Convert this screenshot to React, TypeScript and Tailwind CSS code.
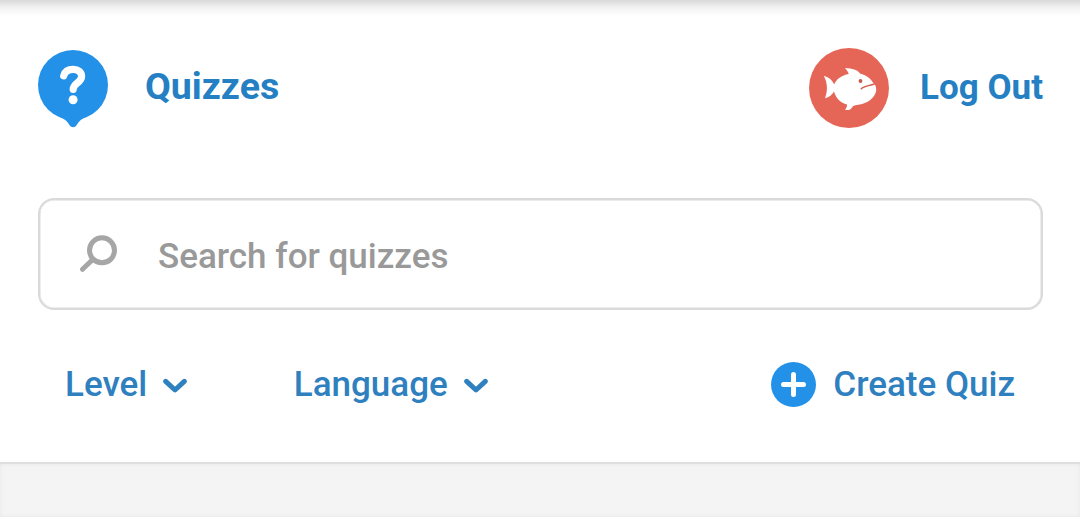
import {useState} from "react"


function QuizLogo() {
  return (
    <svg viewBox="0 0 70 78" fill="none" className="w-[70px] h-[78px] mt-0.5">
      <circle cx="35" cy="35" r="35" fill="#2491e8"/>
      <path fill="#2491e8" d="M22 67C27 69 29.500 71.800 31.600 75.200C33.300 77.800 36.900 77.800 38.600 75.200C40.700 71.800 43 69 48 67z"/>
      <path stroke="#fff" strokeWidth="7.200" strokeLinecap="round" d="M25.700 25.800C26.800 21.500 30.300 19.400 35.200 19.400C40.300 19.400 43.600 22.200 43.600 26.500C43.600 32.800 35.200 33 35.200 39.300"/>
      <circle cx="35.100" cy="49.800" r="4.500" fill="#fff"/>
    </svg>
  )
}


function FishAvatar() {
  return (
    <svg viewBox="0 0 80 80" fill="none" className="size-20">
      <circle cx="40" cy="40" r="40" fill="#e56656"/>
      <path fill="#fff" d="M14.700 27.700C19.500 28.800 23 32 25.200 36.300C27.500 31 32.500 27.300 39.800 26C39 23.800 37.700 21.800 36 20C43.500 20.300 48.500 21.800 51 25.500C57 27 62 30.800 64.500 35.300C67.500 37.500 68 42.500 66.200 46C62.800 52.500 56.500 55.700 49.500 56.800C46.500 57.200 44.500 57.500 43.200 59.200C41.500 61.800 39.500 62.600 36 61.700C37.500 60 38 58.500 38 56.500C31.500 55 27 50.500 25 43.500C23 47 20.500 49 16 50.200C18.800 43 18.800 35 14.700 27.700z"/>
      <circle cx="51.500" cy="33" r="1.900" fill="#c45b4c"/>
      <path stroke="#d45f50" strokeWidth="1.600" strokeLinecap="round" d="M52.300 40.700C54.300 38.300 60 37.500 65 36.300"/>
    </svg>
  )
}


function SearchGlyph() {
  return (
    <svg viewBox="0 0 38 38" fill="none" stroke="#a6a6a6" className="size-[38px]">
      <circle cx="23" cy="15.300" r="12.500" strokeWidth="5"/>
      <path strokeWidth="5" strokeLinecap="round" d="M13.500 24.800L3.500 34.300"/>
    </svg>
  )
}


function Chevron() {
  return (
    <svg viewBox="0 0 24 16" fill="none" className="w-6 h-4 mt-1">
      <path stroke="#2e80bf" strokeWidth="5" strokeLinecap="round" strokeLinejoin="round" d="M2.700 3.300L12 12L21.300 3.300"/>
    </svg>
  )
}


function PlusBadge() {
  return (
    <svg viewBox="0 0 46 46" fill="none" className="size-[46px]">
      <circle cx="22.500" cy="23.500" r="22.500" fill="#2491e8"/>
      <path stroke="#fff" strokeWidth="5" strokeLinecap="round" d="M22.500 13.500V33.500M12.500 23.500H32.500"/>
    </svg>
  )
}


export default function App() {
  const [query, setQuery] = useState("")


  return (
    <div className="flex flex-col h-[517px] bg-white font-[Roboto,sans-serif] overflow-hidden">
      <div className="h-4 shrink-0 bg-linear-to-b from-[#d9d9d9] via-[#f3f3f3] via-50% to-white"/>
      <header className="flex items-center justify-between h-20 mt-8 pl-[38px] pr-[37px] shrink-0 leading-none font-bold text-[#2580c3]">
        <a href="#" className="flex items-center gap-[37px] text-[37.5px]">
          <QuizLogo/>
          <span className="-mt-0.5">Quizzes</span>
        </a>
        <a href="#" className="flex items-center gap-[31px] text-[35px]">
          <FishAvatar/>
          <span className="-mt-0.5">Log Out</span>
        </a>
      </header>
      <form className="flex items-center gap-[41px] h-28 mt-[70px] ml-[38px] mr-[37px] pl-[39px] shrink-0 border-2 border-[#dadada] rounded-2xl shadow-[inset_0_0_0_0.5px_#dadada]">
        <SearchGlyph/>
        <input
          value={query}
          onChange={(e) => setQuery(e.target.value)}
          placeholder="Search for quizzes"
          className="grow pt-1.5 text-[35px] font-medium text-[#555] placeholder:text-[#999] outline-none"
        />
      </form>
      <nav className="flex items-center h-12 mt-[50px] pl-[65px] pr-[65px] shrink-0 text-[35px] leading-none font-medium text-[#2e80bf]">
        <button type="button" className="flex items-center gap-4">
          Level<Chevron/>
        </button>
        <button type="button" className="flex items-center gap-4 ml-[106.5px]">
          Language<Chevron/>
        </button>
        <button type="button" className="flex items-center gap-4 ml-auto">
          <PlusBadge/>Create Quiz
        </button>
      </nav>
      <main className="grow mt-[54px] bg-[#f4f4f4] border-t-2 border-[#dedede] shadow-[inset_0_0_4px_#e6e6e6]"/>
    </div>
  )
}
